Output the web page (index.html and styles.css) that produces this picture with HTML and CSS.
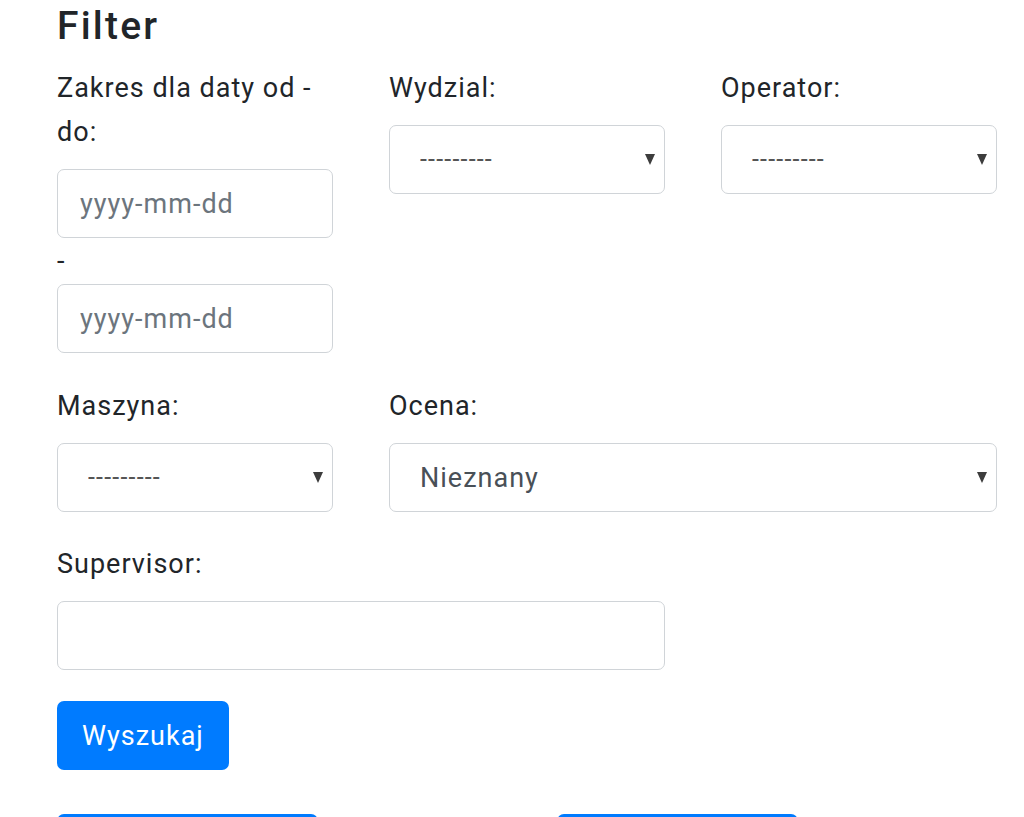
FILE: index.html
```html
<!DOCTYPE html>
<html lang="pl">
<head>
<meta charset="utf-8">
<title>Filter</title>
<link rel="stylesheet" href="styles.css">
</head>
<body>
<main class="page">
  <h2 class="title">Filter</h2>
  <form class="filter">
    <div class="row">
      <div class="field">
        <label class="label">Zakres dla daty od - do:</label>
        <input class="control" type="text" placeholder="yyyy-mm-dd">
        <div class="sep">-</div>
        <input class="control" type="text" placeholder="yyyy-mm-dd">
      </div>
      <div class="field">
        <label class="label">Wydzial:</label>
        <div class="select-wrap">
          <select class="control select small"><option>---------</option></select>
          <span class="arrow"></span>
        </div>
      </div>
      <div class="field">
        <label class="label">Operator:</label>
        <div class="select-wrap">
          <select class="control select small"><option>---------</option></select>
          <span class="arrow"></span>
        </div>
      </div>
    </div>
    <div class="row row-tight">
      <div class="field">
        <label class="label">Maszyna:</label>
        <div class="select-wrap">
          <select class="control select small"><option>---------</option></select>
          <span class="arrow"></span>
        </div>
      </div>
      <div class="field span2">
        <label class="label">Ocena:</label>
        <div class="select-wrap">
          <select class="control select"><option>Nieznany</option></select>
          <span class="arrow"></span>
        </div>
      </div>
    </div>
    <div class="row">
      <div class="field span2">
        <label class="label">Supervisor:</label>
        <input class="control" type="text">
      </div>
    </div>
    <button class="btn" type="button">Wyszukaj</button>
  </form>
  <div class="actions">
    <button class="btn btn-wide" type="button"></button>
    <button class="btn btn-mid" type="button"></button>
  </div>
</main>
</body>
</html>
```

FILE: styles.css
```css
* { box-sizing: border-box; }
html, body { margin: 0; padding: 0; background: #fff; }
body {
  font-family: Roboto, "Liberation Sans", sans-serif;
  color: #212529;
  overflow: hidden;
}
.page {
  padding: 3px 27px 0 57px;
  width: 1024px;
}
.title {
  margin: 0 0 17px;
  font-size: 39px;
  line-height: 46px;
  font-weight: 500;
  letter-spacing: 2.2px;
}
.filter { margin: 0; }
.row {
  display: grid;
  grid-template-columns: 276px 276px 276px;
  column-gap: 56px;
  margin-bottom: 31px;
}
.row-tight { margin-bottom: 30px; }
.field { display: flex; flex-direction: column; }
.span2 { grid-column: span 2; }
.label {
  display: block;
  font-size: 27px;
  line-height: 44px;
  letter-spacing: 1px;
  margin-bottom: 15px;
}
.control {
  display: block;
  width: 100%;
  height: 69px;
  border: 1.5px solid #d0d4d8;
  border-radius: 7px;
  background: #fff;
  padding: 0 22px;
  font-family: Roboto, "Liberation Sans", sans-serif;
  font-size: 27px;
  letter-spacing: 1px;
  color: #495057;
  outline: none;
}
.control::placeholder { color: #6c757d; }
.sep {
  font-size: 27px;
  line-height: 46px;
}
.select-wrap { position: relative; }
.select {
  -webkit-appearance: none;
  appearance: none;
  padding: 0 40px 0 30px;
  color: #495057;
}
.select.small {
  font-size: 25px;
  letter-spacing: 1.2px;
  color: #555;
}
.arrow {
  position: absolute;
  right: 10px;
  top: 29px;
  width: 0;
  height: 0;
  border-left: 5px solid transparent;
  border-right: 5px solid transparent;
  border-top: 11px solid #3d3d3d;
  pointer-events: none;
}
.btn {
  display: block;
  height: 69px;
  padding: 0 25px;
  border: none;
  border-radius: 7px;
  background: #007bff;
  color: #fff;
  font-family: Roboto, "Liberation Sans", sans-serif;
  font-size: 27px;
  letter-spacing: 1px;
}
.actions {
  display: flex;
  gap: 239px;
  margin-top: 44px;
}
.btn-wide { width: 261px; }
.btn-mid { width: 241px; }
```
